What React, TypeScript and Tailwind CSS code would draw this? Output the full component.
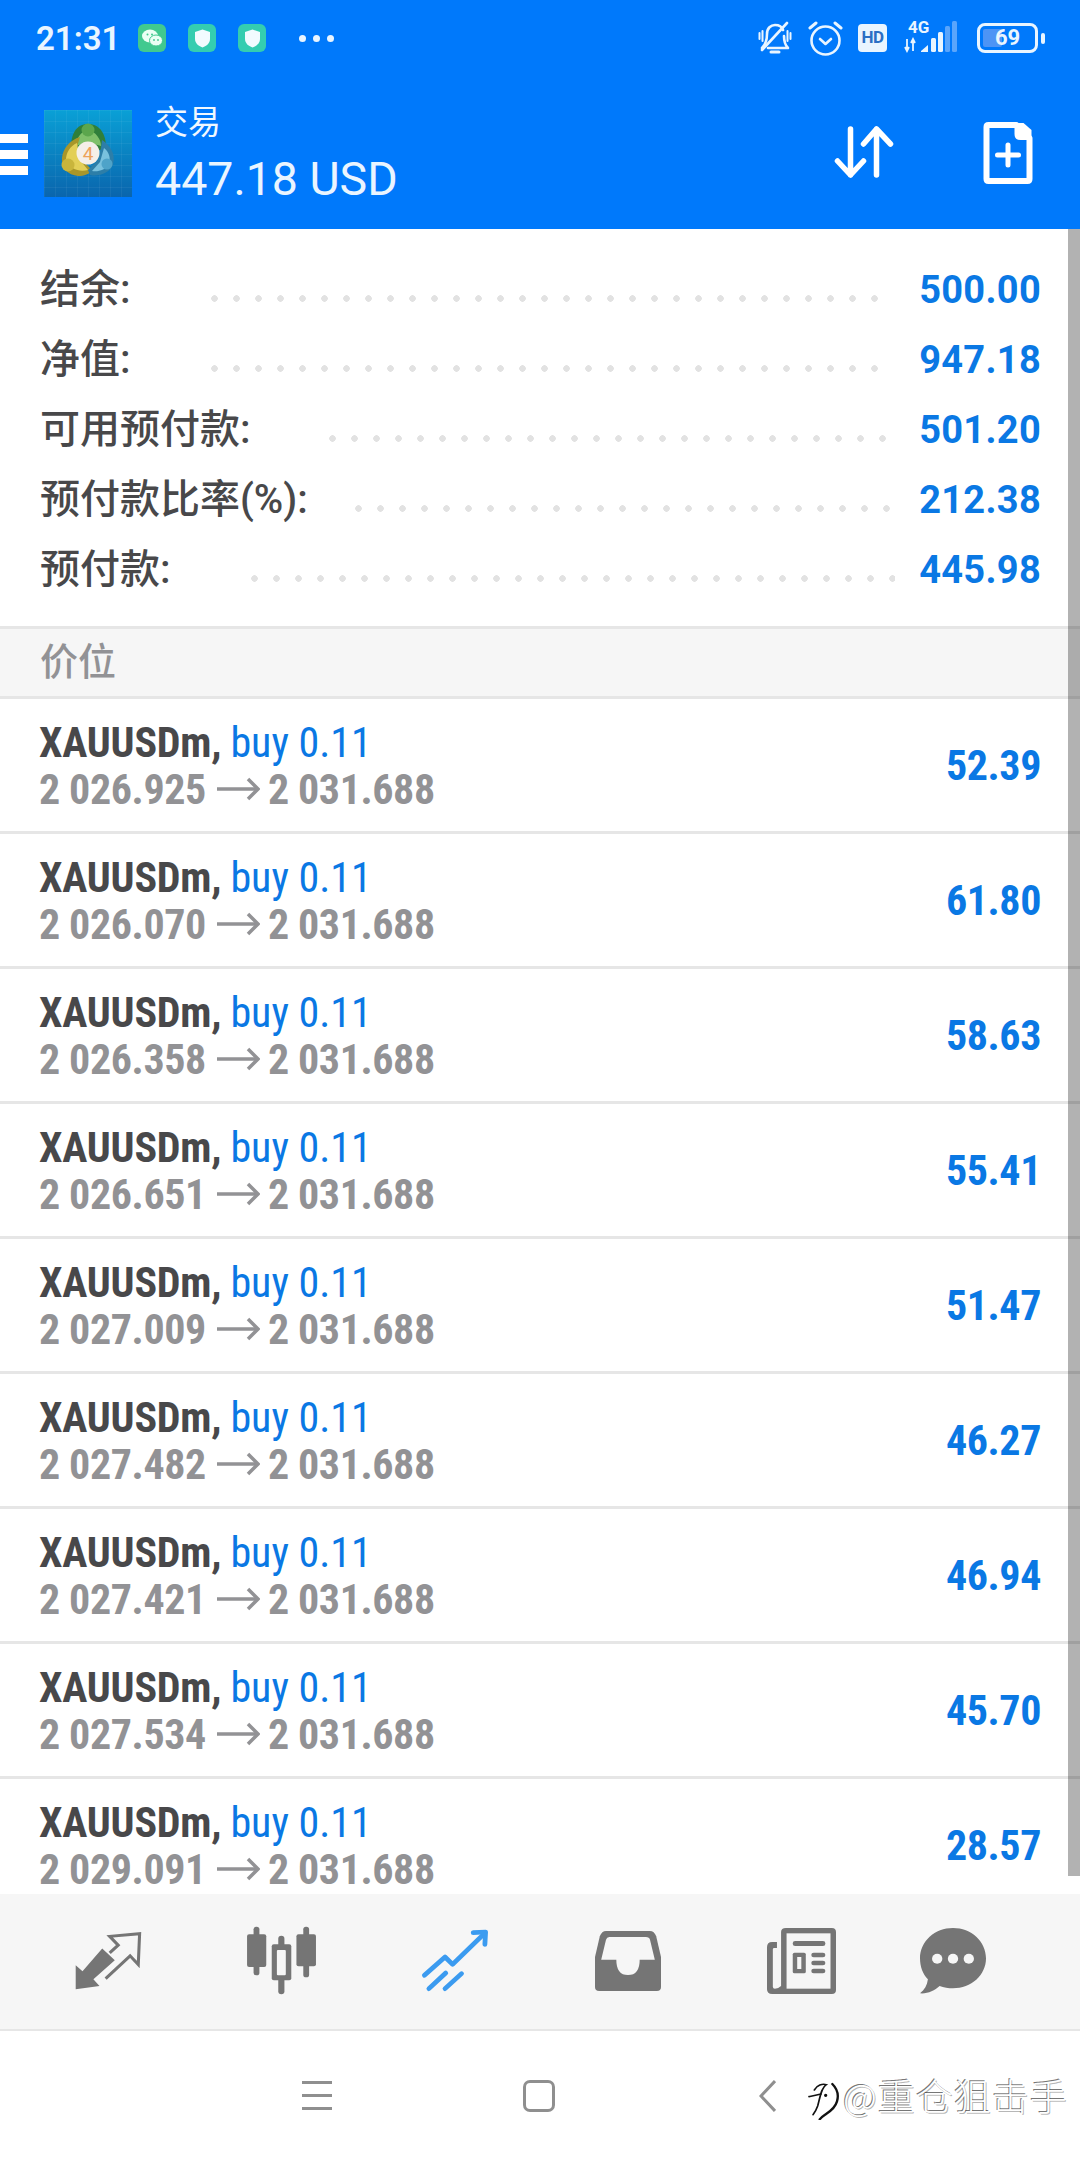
const summary = [
  { label: "结余:", value: "500.00", dots: "ml-[80px] mr-[35px]" },
  { label: "净值:", value: "947.18", dots: "ml-[80px] mr-[35px]" },
  { label: "可用预付款:", value: "501.20", dots: "ml-[78px] mr-[28px]" },
  { label: "预付款比率(%):", value: "212.38", dots: "ml-[47px] mr-[24px]" },
  { label: "预付款:", value: "445.98", dots: "ml-[80px] mr-[24px]" },
];

const positions = [
  { open: "2 026.925", profit: "52.39" },
  { open: "2 026.070", profit: "61.80" },
  { open: "2 026.358", profit: "58.63" },
  { open: "2 026.651", profit: "55.41" },
  { open: "2 027.009", profit: "51.47" },
  { open: "2 027.482", profit: "46.27" },
  { open: "2 027.421", profit: "46.94" },
  { open: "2 027.534", profit: "45.70" },
  { open: "2 029.091", profit: "28.57" },
];

function AppBadge({ shield }: { shield?: boolean }) {
  return (
    <div className={`flex h-[28px] w-[28px] items-center justify-center rounded-[6px] ${shield ? "bg-[#34cdb0]" : "bg-[#41c98f]"}`}>
      {shield ? (
        <svg width="17" height="19" viewBox="0 0 17 19">
          <path d="M8.5 0.5 16 3v7c0 4-3.2 7-7.5 8.500C4.200 17 1 14 1 10V3Z" fill="#f2fbff" />
        </svg>
      ) : (
        <svg width="22" height="20" viewBox="0 0 22 20">
          <ellipse cx="9" cy="8" rx="8" ry="6.500" fill="#eafff4" />
          <ellipse cx="15" cy="12.500" rx="6.500" ry="5.500" fill="#eafff4" stroke="#41c98f" />
          <circle cx="6.500" cy="6.500" r="1" fill="#41c98f" />
          <circle cx="11" cy="6.500" r="1" fill="#41c98f" />
          <circle cx="13" cy="12" r="0.900" fill="#41c98f" />
          <circle cx="17" cy="12" r="0.900" fill="#41c98f" />
        </svg>
      )}
    </div>
  );
}

function StatusBar() {
  return (
    <div className="flex h-[76px] items-center pl-[36px] pr-[35px] text-[#e9f5ff]">
      <span className="w-[102px] text-[33px] font-semibold leading-none [font-family:Roboto,sans-serif]">21:31</span>
      <div className="flex gap-[22px]">
        <AppBadge />
        <AppBadge shield />
        <AppBadge shield />
      </div>
      <div className="ml-[33px] flex gap-[7px]">
        <span className="h-[7px] w-[7px] rounded-full bg-[#e9f5ff]" />
        <span className="h-[7px] w-[7px] rounded-full bg-[#e9f5ff]" />
        <span className="h-[7px] w-[7px] rounded-full bg-[#e9f5ff]" />
      </div>
      <div className="ml-auto flex items-center">
        <svg width="34" height="34" viewBox="0 0 34 34" fill="none" stroke="#e9f5ff" strokeWidth="2.600" strokeLinecap="round" strokeLinejoin="round">
          <path d="M4 27 C8 23 9 18 9 13 C9 7 13 4 17 4 C21 4 24 6 25 9" />
          <path d="M26 15 C26 20 27 24 30 27 H10" />
          <path d="M4 29 29 2" />
          <path d="M13 31 H21" strokeWidth="3" />
          <path d="M1.500 12 V18 M4.500 10 V20 M29.500 10 V20 M32.500 12 V18" strokeWidth="2" />
        </svg>
        <svg className="ml-[16px]" width="35" height="35" viewBox="0 0 35 35" fill="none" stroke="#e9f5ff" strokeWidth="2.600" strokeLinecap="round" strokeLinejoin="round">
          <circle cx="17.500" cy="19.500" r="14" />
          <path d="M12 18 17.500 23 23 18" />
          <path d="M2 7 8 2 M33 7 27 2" strokeWidth="3" />
        </svg>
        <div className="ml-[15px] flex h-[28px] w-[29px] items-center justify-center rounded-[4px] bg-[#e9f5ff] text-[17px] font-bold tracking-[-0.5px] text-[#2b6fc4] [font-family:Roboto,sans-serif]">
          HD
        </div>
        <div className="relative ml-[17px] h-[34px] w-[57px]">
          <span className="absolute left-[4px] top-[-3px] text-[17px] font-bold leading-[18px] [font-family:Roboto,sans-serif]">4G</span>
          <svg className="absolute left-0 top-0" width="57" height="34" viewBox="0 0 57 34" fill="none">
            <path d="M3 18 V30 M1 26 3 30 5 26 M9 30 V18 M7 22 9 18 11 22" stroke="#e9f5ff" strokeWidth="1.800" />
            <path d="M17 30 L24 24 V31 H17Z" fill="#e9f5ff" />
            <rect x="27" y="17" width="5" height="14" rx="1.500" fill="#e9f5ff" />
            <rect x="34" y="11" width="5" height="20" rx="1.500" fill="#e9f5ff" />
            <rect x="41" y="5" width="5" height="26" rx="1.500" fill="#5aa5fb" />
            <rect x="48" y="0" width="5" height="31" rx="1.500" fill="#5aa5fb" />
          </svg>
        </div>
        <div className="ml-[16px] flex items-center gap-[3px]">
          <div className="relative flex h-[30px] w-[61px] items-center justify-center overflow-hidden rounded-[8px] border-[3px] border-[#e9f5ff]">
            <div className="absolute inset-y-[3px] left-[3px] w-[19px] rounded-[2px] bg-[#4d94f5]" />
            <span className="relative text-[22px] font-bold leading-none text-[#e9f5ff] [font-family:Roboto,sans-serif]">69</span>
          </div>
          <div className="h-[11px] w-[4px] rounded-[2px] bg-[#e9f5ff]" />
        </div>
      </div>
    </div>
  );
}

function Mt4Logo() {
  return (
    <svg width="88" height="87" viewBox="0 0 88 87">
      <defs>
        <linearGradient id="mt4bg" x1="0" y1="0" x2="0" y2="1">
          <stop offset="0" stopColor="#0aa0d6" />
          <stop offset="1" stopColor="#0a65ad" />
        </linearGradient>
        <pattern id="mt4grid" width="11" height="11" patternUnits="userSpaceOnUse">
          <path d="M11 0H0V11" fill="none" stroke="#ffffff" strokeOpacity="0.1" />
        </pattern>
      </defs>
      <rect width="88" height="87" fill="url(#mt4bg)" />
      <rect width="88" height="87" fill="url(#mt4grid)" />
      <path d="M44 14 C56 14 62 24 62 38 L56 40 H32 L27 38 C27 24 32 14 44 14Z" fill="#2f7f3a" />
      <path d="M44 20 C52 22 57 29 57 36 L50 34 H38 L32 36 C32 29 36 22 44 20Z" fill="#7fc06a" />
      <path d="M36 27 C26 30 19 38 18 48 C17 58 24 65 34 66 C40 66 46 64 48 60 L40 52 L32 40Z" fill="#a8962a" />
      <path d="M33 33 C26 36 22 43 22 50 C26 60 36 62 44 60 L36 50Z" fill="#e3cf57" />
      <path d="M58 30 C66 35 72 44 69 54 C66 63 55 67 46 65 L44 60 L54 50 L57 38Z" fill="#2d7ea8" />
      <path d="M60 38 C65 42 67 48 65 54 C62 60 54 62 48 61 L56 52Z" fill="#79c1de" />
      <circle cx="44" cy="20" r="6.500" fill="#5ba64d" />
      <circle cx="24" cy="55" r="6.500" fill="#c9b53c" />
      <circle cx="63" cy="54" r="5.500" fill="#4ea3c9" />
      <circle cx="44" cy="43" r="11.500" fill="#f5efe8" />
      <text x="44" y="50" textAnchor="middle" fontSize="19" fontFamily="Roboto, sans-serif" fill="#eda35a">4</text>
    </svg>
  );
}

function Toolbar() {
  return (
    <div className="flex h-[153px] items-start text-white">
      <div className="mt-[58px] flex w-[28px] flex-col gap-[7px]">
        <span className="h-[9px] bg-white" />
        <span className="h-[9px] bg-white" />
        <span className="h-[9px] bg-white" />
      </div>
      <div className="ml-[16px] mt-[34px]">
        <Mt4Logo />
      </div>
      <div className="ml-[23px] mt-[24px] flex flex-col [font-family:Roboto,'Noto_Sans_CJK_SC',sans-serif]">
        <span className="text-[33px] leading-[46px] text-[#f0f8ff]">交易</span>
        <span className="mt-[7px] text-[46.500px] leading-[52px] text-[#eaf5ff]">447.18 USD</span>
      </div>
      <svg className="ml-auto mt-[50px]" width="61" height="52" viewBox="0 0 60 52" fill="none" stroke="#fff" strokeWidth="5.500" strokeLinecap="round" strokeLinejoin="round">
        <path d="M16 3 V49 M3 35 16 49 29 35" />
        <path d="M42 49 V3 M29 18 42 3 56 18" />
      </svg>
      <svg className="ml-[88px] mr-[47px] mt-[46px]" width="50" height="62" viewBox="0 0 49 62" fill="none">
        <path d="M5 3 H33 L46 16 V57 Q46 59 44 59 H5 Q3 59 3 57 V5 Q3 3 5 3Z" stroke="#fff" strokeWidth="6" strokeLinejoin="round" />
        <path d="M31 1 V12 Q31 18 37 18 H48 V8 L40 1Z" fill="#fff" />
        <path d="M24.500 23 V43 M14 33 H35" stroke="#fff" strokeWidth="5" strokeLinecap="round" />
      </svg>
    </div>
  );
}

function SummaryRow({ label, value, dots }: { label: string; value: string; dots: string }) {
  return (
    <div className="flex h-[70px] items-center">
      <span className="text-[40px] font-medium leading-none text-[#48484a] [font-family:Roboto,'Noto_Sans_CJK_SC',sans-serif]">{label}</span>
      <span className={`mt-[16px] h-[7px] flex-1 bg-[radial-gradient(circle_at_3.5px_3.5px,#e2e2e2_3px,transparent_3.5px)] bg-[length:22px_7px] bg-repeat-x ${dots}`} />
      <span className="text-[38px] font-bold leading-none tracking-[0.3px] text-[#0a78e4] [font-family:Roboto,sans-serif]">{value}</span>
    </div>
  );
}

function PositionRow({ open, profit }: { open: string; profit: string }) {
  return (
    <div className="flex h-[135px] shrink-0 items-center border-b-[3px] border-[#e6e6e6] pl-[39px] pr-[39px] [font-family:Roboto,sans-serif] [font-stretch:75%]">
      <div className="mt-[1px] flex flex-col text-[42px] leading-[47px]">
        <div className="flex">
          <span className="font-bold tracking-[-0.2px] text-[#48484a]">XAUUSDm,</span>
          <span className="ml-[9px] text-[#0a78e4]">buy 0.11</span>
        </div>
        <div className="flex items-center font-bold tracking-[-0.4px] text-[#929295]">
          <span>{open}</span>
          <svg className="ml-[11px] mr-[8px]" width="43" height="24" viewBox="0 0 43 24" fill="none" stroke="#929295" strokeWidth="3.500">
            <path d="M0 12 H41" />
            <path d="M31 2 41 12 31 22" />
          </svg>
          <span>2 031.688</span>
        </div>
      </div>
      <span className="ml-auto text-[42px] font-bold tracking-[-0.4px] text-[#0a78e4]">{profit}</span>
    </div>
  );
}

function BottomNav() {
  return (
    <div className="flex h-[137px] shrink-0 items-center border-b-[2px] border-[#e6e6e6] bg-[#f6f6f6] pb-[2px]">
      <svg className="ml-[74px]" width="68" height="62" viewBox="215 215 200 185" preserveAspectRatio="none">
        <path d="M220 320 V392 L290 382 L272 362 L335 305 L298 270 L240 338Z" fill="#757575" />
        <path d="M308 360 L380 292 L404 318 L408 226 L320 234 L345 260 L320 283" fill="none" stroke="#757575" strokeWidth="9" />
      </svg>
      <svg className="ml-[103px]" width="72" height="70" viewBox="710 203 210 210" preserveAspectRatio="none">
        <rect x="735" y="205" width="17" height="146" rx="8" fill="#757575" />
        <rect x="716" y="228" width="56" height="98" rx="6" fill="#757575" />
        <rect x="880" y="205" width="17" height="152" rx="8" fill="#757575" />
        <rect x="860" y="228" width="57" height="96" rx="6" fill="#757575" />
        <rect x="807" y="232" width="18" height="176" rx="9" fill="#757575" />
        <rect x="788" y="258" width="57" height="108" rx="6" fill="#757575" />
        <rect x="803" y="275" width="26" height="76" rx="3" fill="#f6f6f6" />
      </svg>
      <svg className="ml-[104px]" width="68" height="64" viewBox="1220 208 198 192" preserveAspectRatio="none" fill="none" stroke="#3b9bf0" strokeWidth="14" strokeLinecap="round" strokeLinejoin="round">
        <path d="M1230 347 L1290 292 L1312 314 L1402 224" />
        <path d="M1372 219 L1408 217 L1406 254" />
        <path d="M1243 387 L1292 340 M1290 387 L1338 342" />
      </svg>
      <svg className="ml-[106px]" width="66" height="60" viewBox="158 212 192 180" preserveAspectRatio="none">
        <path d="M190 212 H318 Q330 212 336 228 L350 290 V380 Q350 392 338 392 H170 Q158 392 158 380 V290 L172 228 Q178 212 190 212Z" fill="#757575" />
        <path d="M200 230 H306 Q316 230 318 238 L332 298 H288 Q288 344 254 344 Q220 344 220 298 H176 L190 238 Q192 230 200 230Z" fill="#f6f6f6" />
      </svg>
      <svg className="ml-[106px]" width="69" height="66" viewBox="657 204 201 198" preserveAspectRatio="none">
        <path d="M712 204 H846 Q858 204 858 216 V390 Q858 402 846 402 H672 Q657 402 657 388 V262 Q657 246 672 246 H686 V264 H678 Q674 264 674 268 V380 Q674 386 680 386 Q690 386 698 378 V216 Q698 204 712 204Z" fill="#757575" />
        <rect x="714" y="220" width="128" height="166" fill="#f6f6f6" />
        <rect x="732" y="243" width="95" height="15" rx="7" fill="#757575" />
        <rect x="732" y="278" width="38" height="62" rx="5" fill="#757575" />
        <rect x="745" y="291" width="12" height="36" fill="#f6f6f6" />
        <rect x="786" y="278" width="41" height="14" rx="7" fill="#757575" />
        <rect x="786" y="302" width="41" height="14" rx="7" fill="#757575" />
        <rect x="786" y="326" width="41" height="14" rx="7" fill="#757575" />
      </svg>
      <svg className="ml-[84px]" width="66" height="66" viewBox="1103 204 192 198" preserveAspectRatio="none">
        <path d="M1199 204 C1252 204 1295 244 1295 295 C1295 346 1252 385 1199 385 C1186 385 1172 383 1160 378 C1145 392 1125 402 1103 400 C1116 390 1124 376 1126 358 C1111 342 1103 320 1103 295 C1103 244 1146 204 1199 204Z" fill="#757575" />
        <circle cx="1153" cy="296" r="15" fill="#f6f6f6" />
        <circle cx="1199" cy="296" r="15" fill="#f6f6f6" />
        <circle cx="1245" cy="296" r="15" fill="#f6f6f6" />
      </svg>
    </div>
  );
}

function SystemNav() {
  return (
    <div className="flex flex-1 items-center bg-white">
      <div className="ml-[302px] flex w-[30px] flex-col gap-[10px]">
        <span className="h-[3px] bg-[#8f8f8f]" />
        <span className="h-[3px] bg-[#8f8f8f]" />
        <span className="h-[3px] bg-[#8f8f8f]" />
      </div>
      <div className="ml-[191px] h-[32px] w-[32px] rounded-[7px] border-[3px] border-[#8f8f8f]" />
      <svg className="ml-[204px]" width="17" height="32" viewBox="0 0 17 32" fill="none" stroke="#8f8f8f" strokeWidth="3">
        <path d="M16 1 2 16 16 31" />
      </svg>
      <svg className="ml-[31px] mt-[11px]" width="32" height="38" viewBox="20 48 96 114" fill="none" stroke="#111" strokeWidth="5" strokeLinecap="round">
        <path d="M42 72 C50 58 66 52 78 56 C62 66 60 92 52 120 C48 132 44 138 38 146" />
        <path d="M26 92 C36 90 48 88 62 84" />
        <path d="M96 54 C110 68 116 86 110 106 C104 128 86 138 74 146 C68 150 62 154 58 160" strokeWidth="7" />
        <circle cx="76" cy="88" r="2.500" fill="#111" />
      </svg>
      <span className="ml-[4px] whitespace-nowrap text-[37px] font-light leading-none tracking-[1px] text-white [font-family:'Noto_Sans_CJK_SC',sans-serif] [text-shadow:-1px_-1px_0_rgba(0,0,0,0.55),1px_1px_0_rgba(0,0,0,0.3)]">
        @重仓狙击手
      </span>
    </div>
  );
}

export default function App() {
  return (
    <div className="flex h-[2160px] w-[1080px] flex-col overflow-hidden bg-white">
      <header className="shrink-0 bg-[#0079fb]">
        <StatusBar />
        <Toolbar />
      </header>
      <main className="relative flex h-[1665px] shrink-0 flex-col overflow-hidden">
        <section className="shrink-0 pb-[21px] pl-[40px] pr-[39px] pt-[26px]">
          {summary.map((row) => (
            <SummaryRow key={row.label} {...row} />
          ))}
        </section>
        <div className="flex h-[73px] shrink-0 items-center border-y-[3px] border-[#e6e6e6] bg-[#f6f6f6] pb-[8px] pl-[40px] text-[38px] font-medium text-[#929295] [font-family:'Noto_Sans_CJK_SC',sans-serif]">
          价位
        </div>
        {positions.map((row) => (
          <PositionRow key={row.open} {...row} />
        ))}
        <div className="absolute right-0 top-0 h-[1647px] w-[12px] bg-black/30" />
      </main>
      <BottomNav />
      <SystemNav />
    </div>
  );
}
